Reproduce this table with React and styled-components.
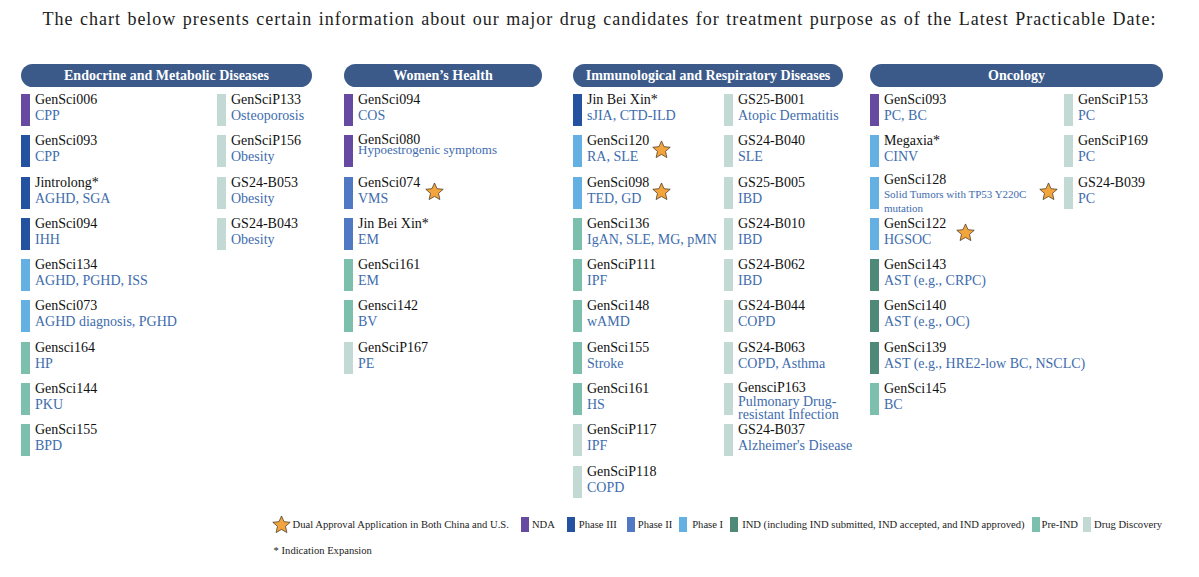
import React from "react";
import styled, { createGlobalStyle } from "styled-components";

const GlobalStyle = createGlobalStyle`
  html, body {
    margin: 0;
    padding: 0;
    background: #ffffff;
  }
  body {
    font-family: "Liberation Serif", "Times New Roman", serif;
    color: #111;
  }
`;

// phase colours
const PHASE = {
  nda: "#6649a0",
  p3: "#2452a0",
  p2: "#5179c3",
  p1: "#64b0e3",
  ind: "#4f8a78",
  pre: "#7dbfad",
  dd: "#c3dad4",
};

const INDICATION_BLUE = "#3e6cad";

// text layouts for the few items that are squeezed in the original chart
const VARIANTS = {
  normal: { top: -2, nameLh: 16, indSize: 14, indLh: 16 },
  tight: { top: 0, nameLh: 10, indSize: 13, indLh: 10 },
  small: { top: -4, nameLh: 14, indSize: 11, indLh: 14 },
  dense: { top: -2, nameLh: 13.5, indSize: 14, indLh: 13.5 },
};

const Page = styled.div`
  width: 1199px;
  padding-top: 8px;
`;

const Title = styled.div`
  font-size: 18px;
  line-height: 22px;
  text-align: center;
  color: #1c1c1c;
  letter-spacing: 1px;
  word-spacing: 1px;
  white-space: nowrap;
`;

const Board = styled.div`
  display: flex;
  align-items: flex-start;
  padding-left: 21px;
  margin-top: 34px;
`;

const Section = styled.div`
  width: ${(p) => p.$width}px;
  margin-left: ${(p) => p.$ml || 0}px;
  flex-shrink: 0;
`;

const Pill = styled.div`
  height: 23px;
  border-radius: 12px;
  background: #3b5a8a;
  color: #ffffff;
  font-weight: bold;
  font-size: 14px;
  line-height: 23px;
  text-align: center;
  white-space: nowrap;
`;

const Columns = styled.div`
  display: grid;
  grid-template-columns: ${(p) => p.$cols};
  margin-top: 7px;
`;

const Column = styled.div`
  display: flex;
  flex-direction: column;
  gap: 9.3px;
`;

const Item = styled.div`
  display: flex;
  align-items: flex-start;
  height: 32px;
`;

const Bar = styled.div`
  width: 9px;
  height: 32px;
  flex-shrink: 0;
  background: ${(p) => p.$color};
`;

const TextBlock = styled.div`
  margin-left: 5px;
  margin-top: ${(p) => p.$top}px;
  white-space: nowrap;
`;

const Name = styled.div`
  font-size: 14px;
  line-height: ${(p) => p.$lh}px;
  color: #111;
`;

const Indication = styled.div`
  font-size: ${(p) => p.$size}px;
  line-height: ${(p) => p.$lh}px;
  color: ${INDICATION_BLUE};
`;

const StarWrap = styled.div`
  align-self: center;
  margin-left: ${(p) => p.$gap}px;
  margin-bottom: 3px;
  display: flex;
`;

const Legend = styled.div`
  display: flex;
  justify-content: flex-end;
  padding-right: 37px;
  margin-top: 17px;
`;

const LegendBlock = styled.div`
  display: flex;
  flex-direction: column;
  gap: 11px;
`;

const LegendRow = styled.div`
  display: flex;
  align-items: center;
  font-size: 10.6px;
  color: #1c1c1c;
`;

const LegendItem = styled.div`
  display: flex;
  align-items: center;
  gap: ${(p) => p.$gap}px;
  margin-right: ${(p) => p.$after}px;
  white-space: nowrap;
`;

const Swatch = styled.div`
  width: 8px;
  height: 15px;
  background: ${(p) => p.$color};
`;

const Footnote = styled.div`
  font-size: 10.6px;
  color: #1c1c1c;
  padding-left: 2px;
`;

const Star = ({ size = 19 }) => (
  <svg width={size} height={size} viewBox="0 0 24 24">
    <polygon
      points="12,1.2 15.2,8.4 23,9.2 17.1,14.3 18.8,22.2 12,18.2 5.2,22.2 6.9,14.3 1,9.2 8.8,8.4"
      fill="#f4a43c"
      stroke="#3d3220"
      strokeWidth="0.9"
      strokeLinejoin="miter"
    />
  </svg>
);

const sections = [
  {
    title: "Endocrine and Metabolic Diseases",
    width: 291,
    ml: 0,
    cols: "196px 1fr",
    columns: [
      [
        { name: "GenSci006", ind: ["CPP"], phase: "nda" },
        { name: "GenSci093", ind: ["CPP"], phase: "p3" },
        { name: "Jintrolong*", ind: ["AGHD, SGA"], phase: "p3" },
        { name: "GenSci094", ind: ["IHH"], phase: "p3" },
        { name: "GenSci134", ind: ["AGHD, PGHD, ISS"], phase: "p1" },
        { name: "GenSci073", ind: ["AGHD diagnosis, PGHD"], phase: "p1" },
        { name: "Gensci164", ind: ["HP"], phase: "pre" },
        { name: "GenSci144", ind: ["PKU"], phase: "pre" },
        { name: "GenSci155", ind: ["BPD"], phase: "pre" },
      ],
      [
        { name: "GenSciP133", ind: ["Osteoporosis"], phase: "dd" },
        { name: "GenSciP156", ind: ["Obesity"], phase: "dd" },
        { name: "GS24-B053", ind: ["Obesity"], phase: "dd" },
        { name: "GS24-B043", ind: ["Obesity"], phase: "dd" },
      ],
    ],
  },
  {
    title: "Women\u2019s Health",
    width: 198,
    ml: 32,
    cols: "1fr",
    columns: [
      [
        { name: "GenSci094", ind: ["COS"], phase: "nda" },
        { name: "GenSci080", ind: ["Hypoestrogenic symptoms"], phase: "nda", variant: "tight" },
        { name: "GenSci074", ind: ["VMS"], phase: "p2", star: 5 },
        { name: "Jin Bei Xin*", ind: ["EM"], phase: "p2" },
        { name: "GenSci161", ind: ["EM"], phase: "pre" },
        { name: "Gensci142", ind: ["BV"], phase: "pre" },
        { name: "GenSciP167", ind: ["PE"], phase: "dd" },
      ],
    ],
  },
  {
    title: "Immunological and Respiratory Diseases",
    width: 270,
    ml: 31,
    cols: "151px 1fr",
    columns: [
      [
        { name: "Jin Bei Xin*", ind: ["sJIA, CTD-ILD"], phase: "p3" },
        { name: "GenSci120", ind: ["RA, SLE"], phase: "p1", star: 3 },
        { name: "GenSci098", ind: ["TED, GD"], phase: "p1", star: 3 },
        { name: "GenSci136", ind: ["IgAN, SLE, MG, pMN"], phase: "pre" },
        { name: "GenSciP111", ind: ["IPF"], phase: "pre" },
        { name: "GenSci148", ind: ["wAMD"], phase: "pre" },
        { name: "GenSci155", ind: ["Stroke"], phase: "pre" },
        { name: "GenSci161", ind: ["HS"], phase: "pre" },
        { name: "GenSciP117", ind: ["IPF"], phase: "dd" },
        { name: "GenSciP118", ind: ["COPD"], phase: "dd" },
      ],
      [
        { name: "GS25-B001", ind: ["Atopic Dermatitis"], phase: "dd" },
        { name: "GS24-B040", ind: ["SLE"], phase: "dd" },
        { name: "GS25-B005", ind: ["IBD"], phase: "dd" },
        { name: "GS24-B010", ind: ["IBD"], phase: "dd" },
        { name: "GS24-B062", ind: ["IBD"], phase: "dd" },
        { name: "GS24-B044", ind: ["COPD"], phase: "dd" },
        { name: "GS24-B063", ind: ["COPD, Asthma"], phase: "dd" },
        { name: "GensciP163", ind: ["Pulmonary Drug-", "resistant Infection"], phase: "dd", variant: "dense" },
        { name: "GS24-B037", ind: ["Alzheimer's Disease"], phase: "dd" },
      ],
    ],
  },
  {
    title: "Oncology",
    width: 293,
    ml: 27,
    cols: "194px 1fr",
    columns: [
      [
        { name: "GenSci093", ind: ["PC, BC"], phase: "nda" },
        { name: "Megaxia*", ind: ["CINV"], phase: "p1" },
        { name: "GenSci128", ind: ["Solid Tumors with TP53 Y220C", "mutation"], phase: "p1", variant: "small", star: 13 },
        { name: "GenSci122", ind: ["HGSOC"], phase: "p1", star: 10 },
        { name: "GenSci143", ind: ["AST (e.g., CRPC)"], phase: "ind" },
        { name: "GenSci140", ind: ["AST (e.g., OC)"], phase: "ind" },
        { name: "GenSci139", ind: ["AST (e.g., HRE2-low BC, NSCLC)"], phase: "ind" },
        { name: "GenSci145", ind: ["BC"], phase: "pre" },
      ],
      [
        { name: "GenSciP153", ind: ["PC"], phase: "dd" },
        { name: "GenSciP169", ind: ["PC"], phase: "dd" },
        { name: "GS24-B039", ind: ["PC"], phase: "dd" },
      ],
    ],
  },
];

// gap = swatch-to-label, after = space before the next entry
const legend = [
  { label: "NDA", phase: "nda", gap: 3, after: 12 },
  { label: "Phase III", phase: "p3", gap: 4, after: 10 },
  { label: "Phase II", phase: "p2", gap: 3, after: 7 },
  { label: "Phase I", phase: "p1", gap: 5, after: 7 },
  { label: "IND (including IND submitted, IND accepted, and IND approved)", phase: "ind", gap: 4, after: 7 },
  { label: "Pre-IND", phase: "pre", gap: 2, after: 5 },
  { label: "Drug Discovery", phase: "dd", gap: 3, after: 0 },
];

const Candidate = ({ item }) => {
  const v = VARIANTS[item.variant || "normal"];
  return (
    <Item>
      <Bar $color={PHASE[item.phase]} />
      <TextBlock $top={v.top}>
        <Name $lh={v.nameLh}>{item.name}</Name>
        {item.ind.map((line) => (
          <Indication key={line} $size={v.indSize} $lh={v.indLh}>
            {line}
          </Indication>
        ))}
      </TextBlock>
      {item.star !== undefined && (
        <StarWrap $gap={item.star}>
          <Star />
        </StarWrap>
      )}
    </Item>
  );
};

export default function App() {
  return (
    <Page>
      <GlobalStyle />
      <Title>
        The chart below presents certain information about our major drug candidates for treatment purpose as of the Latest Practicable Date:
      </Title>

      <Board>
        {sections.map((s) => (
          <Section key={s.title} $width={s.width} $ml={s.ml}>
            <Pill>{s.title}</Pill>
            <Columns $cols={s.cols}>
              {s.columns.map((col, i) => (
                <Column key={i}>
                  {col.map((item) => (
                    <Candidate key={item.name + item.ind[0]} item={item} />
                  ))}
                </Column>
              ))}
            </Columns>
          </Section>
        ))}
      </Board>

      {/* Legend */}
      <Legend>
        <LegendBlock>
          <LegendRow>
            <LegendItem $gap={2} $after={12}>
              <Star />
              Dual Approval Application in Both China and U.S.
            </LegendItem>
            {legend.map((l) => (
              <LegendItem key={l.phase} $gap={l.gap} $after={l.after}>
                <Swatch $color={PHASE[l.phase]} />
                {l.label}
              </LegendItem>
            ))}
          </LegendRow>
          <Footnote>* Indication Expansion</Footnote>
        </LegendBlock>
      </Legend>
    </Page>
  );
}
